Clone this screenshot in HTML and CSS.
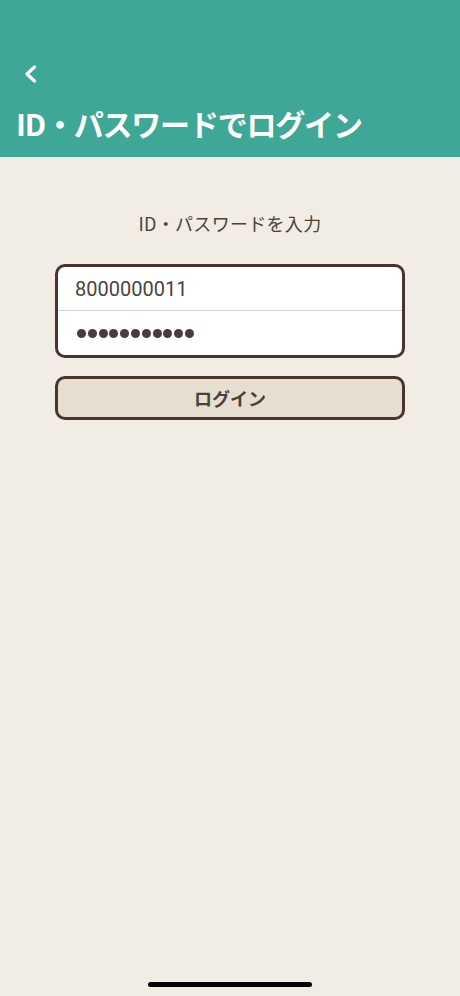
FILE: index.html
```html
<!DOCTYPE html>
<html>
<head>
	<meta charset="utf-8">
	<title>ID・パスワードでログイン</title>
	<link rel="stylesheet" href="styles.css">
</head>
<body>
	<div id="screen">
		<div id="header">
			<div class="back">
				<svg width="18" height="20" viewBox="0 0 18 20">
					<path d="M12.5 3 L5 10 L12.5 17" fill="none" stroke="#fff" stroke-width="3.2" stroke-linecap="round" stroke-linejoin="round"/>
				</svg>
			</div>
			<h1 class="title">ID・パスワードでログイン</h1>
		</div>
		<div id="main">
			<p class="lead">ID・パスワードを入力</p>
			<div class="fields">
				<div class="field">8000000011</div>
				<div class="field pass">
					<span></span><span></span><span></span><span></span><span></span><span></span><span></span><span></span><span></span><span></span><span></span>
				</div>
			</div>
			<div class="btn">ログイン</div>
		</div>
		<div class="home"></div>
	</div>
</body>
</html>
```

FILE: styles.css
```css
*{margin: 0;
	padding: 0;
	box-sizing: border-box;
}
body{
	font-family: Roboto, "Noto Sans CJK JP", sans-serif;
	background: #f1ece4;
	color: #4a403c;
}
#screen{
	width: 460px;
	height: 996px;
	position: relative;
	overflow: hidden;
}
#header{
	height: 157px;
	background: #3fa796;
	padding-top: 64px;
	color: #fff;
}
#header .back{
	margin-left: 22px;
	height: 20px;
}
#header .back svg{
	display: block;
}
#header .title{
	margin-top: 19px;
	margin-left: 16px;
	font-family: "Noto Sans CJK JP", sans-serif;
	font-size: 30px;
	font-weight: bold;
	line-height: 40px;
	letter-spacing: -1.2px;
}
#main{
	padding: 53px 55px 0;
}
#main .lead{
	text-align: center;
	font-family: "Noto Sans CJK JP", sans-serif;
	font-size: 18px;
	line-height: 26px;
	letter-spacing: 0.3px;
}
.fields{
	margin-top: 28px;
	border: 3px solid #4a3430;
	border-radius: 10px;
	background: #fff;
	overflow: hidden;
}
.field{
	height: 44px;
	padding-left: 17px;
	display: flex;
	align-items: center;
	font-size: 20px;
	color: #4a4240;
}
.field:first-child{
	height: 44px;
	border-bottom: 1px solid #d6d2cf;
}
.field.pass{
	padding-left: 19px;
	gap: 1.8px;
}
.field.pass span{
	width: 9px;
	height: 9px;
	border-radius: 50%;
	background: #4a3c3a;
}
.btn{
	margin-top: 18px;
	height: 44px;
	border: 3px solid #4a3430;
	border-radius: 10px;
	background: #e6dfcf;
	display: flex;
	align-items: center;
	justify-content: center;
	font-family: "Noto Sans CJK JP", sans-serif;
	font-size: 18px;
	font-weight: bold;
	color: #4a403c;
}
.home{
	position: absolute;
	left: 148px;
	bottom: 9px;
	width: 164px;
	height: 5px;
	border-radius: 3px;
	background: #000;
}
```
